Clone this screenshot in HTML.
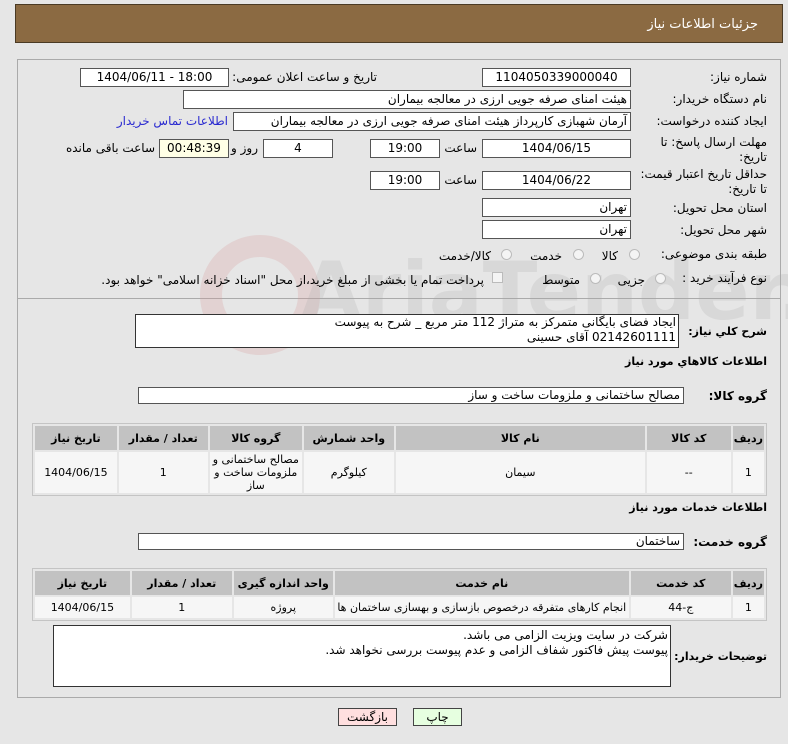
<!DOCTYPE html>
<html><head><meta charset="utf-8"><style>
body{margin:0;width:788px;height:744px;background:#e6e6e6;font-family:"DejaVu Sans","Liberation Sans",sans-serif;font-size:11px;color:#000;position:relative;overflow:hidden}
.a{position:absolute;white-space:nowrap}
.r{direction:rtl;text-align:right}
.box{position:absolute;background:#fff;border:1px solid #555;box-sizing:border-box;height:19px;line-height:17px;text-align:center;font-size:12px}
.box.r{text-align:right;direction:rtl}
.lb{position:absolute;direction:rtl;white-space:nowrap;font-size:12px}
.b{font-weight:bold}
.rad{position:absolute;width:11px;height:11px;border-radius:50%;border:1px solid #bbb;background:#f4f4f4;box-sizing:border-box}
table{position:absolute;border-collapse:separate;border-spacing:2px;background:#e6e6e6;border:1px solid #c4c4c4;direction:rtl;font-size:11px}
th{background:#c2c2c2;font-weight:bold;height:22px}
td{background:#f6f6f6;text-align:center}
.btn{position:absolute;border:1px solid #444;box-sizing:border-box;height:18px;line-height:16px;text-align:center;font-size:12px}
</style></head><body>
<div class="a" style="left:15px;top:4px;width:768px;height:39px;background:#8b6a42;border:1px solid #4a3a24;box-sizing:border-box"></div>
<div class="lb" style="right:30px;top:17px;color:#fff;font-size:13px">جزئیات اطلاعات نیاز</div>
<div class="a" style="left:17px;top:59px;width:764px;height:639px;border:1px solid #aaa;box-sizing:border-box"></div>
<div class="a" style="left:17px;top:298px;width:764px;border-top:1px solid #aaa"></div>
<div class="a" style="left:200px;top:235px;width:120px;height:120px;border-radius:50%;border:22px solid rgba(215,150,150,0.25);box-sizing:border-box"></div>
<div class="a" style="left:300px;top:245px;font-size:80px;font-weight:bold;color:rgba(170,170,170,0.22)">AriaTender.net</div>

<div class="lb" style="right:21px;top:70px">شماره نیاز:</div>
<div class="box" style="left:482px;top:68px;width:149px">1104050339000040</div>
<div class="lb" style="right:411px;top:70px">تاریخ و ساعت اعلان عمومی:</div>
<div class="box" style="left:80px;top:68px;width:149px">1404/06/11 - 18:00</div>

<div class="lb" style="right:21px;top:92px">نام دستگاه خریدار:</div>
<div class="box r" style="left:183px;top:90px;width:448px;padding-right:3px">هیئت امنای صرفه جویی ارزی در معالجه بیماران</div>

<div class="lb" style="right:21px;top:114px">ایجاد کننده درخواست:</div>
<div class="box r" style="left:233px;top:112px;width:398px;padding-right:3px">آرمان شهبازی کارپرداز هیئت امنای صرفه جویی ارزی در معالجه بیماران</div>
<div class="lb" style="right:560px;top:114px;color:#2a2ad0">اطلاعات تماس خریدار</div>

<div class="lb" style="right:21px;top:135px;line-height:15px">مهلت ارسال پاسخ: تا<br>تاریخ:</div>
<div class="box" style="left:482px;top:139px;width:149px">1404/06/15</div>
<div class="lb" style="right:311px;top:141px">ساعت</div>
<div class="box" style="left:370px;top:139px;width:70px">19:00</div>
<div class="box" style="left:263px;top:139px;width:70px">4</div>
<div class="lb" style="right:530px;top:141px">روز و</div>
<div class="box" style="left:159px;top:139px;width:70px;background:#ffffe6">00:48:39</div>
<div class="lb" style="right:633px;top:141px">ساعت باقی مانده</div>

<div class="lb" style="right:21px;top:167px;line-height:15px">حداقل تاریخ اعتبار قیمت:<br>تا تاریخ:</div>
<div class="box" style="left:482px;top:171px;width:149px">1404/06/22</div>
<div class="lb" style="right:311px;top:173px">ساعت</div>
<div class="box" style="left:370px;top:171px;width:70px">19:00</div>

<div class="lb" style="right:21px;top:201px">استان محل تحویل:</div>
<div class="box r" style="left:482px;top:198px;width:149px;padding-right:3px">تهران</div>
<div class="lb" style="right:21px;top:223px">شهر محل تحویل:</div>
<div class="box r" style="left:482px;top:220px;width:149px;padding-right:3px">تهران</div>

<div class="lb" style="right:21px;top:247px">طبقه بندی موضوعی:</div>
<div class="rad" style="left:629px;top:249px"></div><div class="lb" style="right:170px;top:249px">کالا</div>
<div class="rad" style="left:573px;top:249px"></div><div class="lb" style="right:226px;top:249px">خدمت</div>
<div class="rad" style="left:501px;top:249px"></div><div class="lb" style="right:297px;top:249px">کالا/خدمت</div>

<div class="lb" style="right:21px;top:271px">نوع فرآیند خرید :</div>
<div class="rad" style="left:655px;top:273px"></div><div class="lb" style="right:143px;top:273px">جزیی</div>
<div class="rad" style="left:590px;top:273px"></div><div class="lb" style="right:208px;top:273px">متوسط</div>
<div class="a" style="left:492px;top:272px;width:11px;height:11px;border:1px solid #bbb;background:#f4f4f4;box-sizing:border-box"></div>
<div class="lb" style="right:304px;top:273px">پرداخت تمام یا بخشی از مبلغ خرید،از محل "اسناد خزانه اسلامی" خواهد بود.</div>

<div class="lb b" style="right:21px;top:325px;font-size:11px">شرح کلي نیاز:</div>
<div class="a r" style="left:135px;top:314px;width:544px;height:34px;background:#fff;border:1px solid #333;box-sizing:border-box;padding-right:2px;font-size:12px;line-height:15px">ایجاد فضای بایگانی متمرکز به متراژ 112 متر مربع _ شرح به پیوست<br>02142601111 آقای حسینی</div>
<div class="lb b" style="right:21px;top:355px;font-size:11px">اطلاعات کالاهاي مورد نیاز</div>

<div class="lb b" style="right:21px;top:389px;font-size:12px">گروه کالا:</div>
<div class="box r" style="left:138px;top:387px;width:546px;height:17px;line-height:15px;padding-right:3px">مصالح ساختمانی و ملزومات ساخت و ساز</div>

<table style="left:32px;top:423px;width:735px">
<tr><th style="width:24px">ردیف</th><th style="width:82px">کد کالا</th><th style="width:247px">نام کالا</th><th style="width:88px">واحد شمارش</th><th style="width:90px">گروه کالا</th><th style="width:87px">تعداد / مقدار</th><th>تاریخ نیاز</th></tr>
<tr style="height:41px"><td>1</td><td>--</td><td>سیمان</td><td>کیلوگرم</td><td style="line-height:13px">مصالح ساختمانی و ملزومات ساخت و ساز</td><td>1</td><td>1404/06/15</td></tr>
</table>

<div class="lb b" style="right:21px;top:501px;font-size:11px">اطلاعات خدمات مورد نیاز</div>
<div class="lb b" style="right:21px;top:535px;font-size:12px">گروه خدمت:</div>
<div class="box r" style="left:138px;top:533px;width:546px;height:17px;line-height:15px;padding-right:3px">ساختمان</div>

<table style="left:32px;top:568px;width:735px">
<tr><th style="width:24px">ردیف</th><th style="width:98px">کد خدمت</th><th style="width:292px">نام خدمت</th><th style="width:97px">واحد اندازه گیری</th><th style="width:98px">تعداد / مقدار</th><th>تاریخ نیاز</th></tr>
<tr style="height:21px"><td>1</td><td>ج-44</td><td>انجام کارهای متفرقه درخصوص بازسازی و بهسازی ساختمان ها</td><td>پروژه</td><td>1</td><td>1404/06/15</td></tr>
</table>

<div class="lb b" style="right:21px;top:650px;font-size:11px">توضیحات خریدار:</div>
<div class="a r" style="left:53px;top:625px;width:618px;height:62px;background:#fff;border:1px solid #333;box-sizing:border-box;padding:2px;font-size:12px;line-height:15px">شرکت در سایت ویزیت الزامی می باشد.<br>پیوست پیش فاکتور شفاف الزامی و عدم پیوست بررسی نخواهد شد.</div>

<div class="btn" style="left:338px;top:708px;width:59px;background:#ffdfdf">بازگشت</div>
<div class="btn" style="left:413px;top:708px;width:49px;background:#e6ffe0">چاپ</div>
</body></html>
